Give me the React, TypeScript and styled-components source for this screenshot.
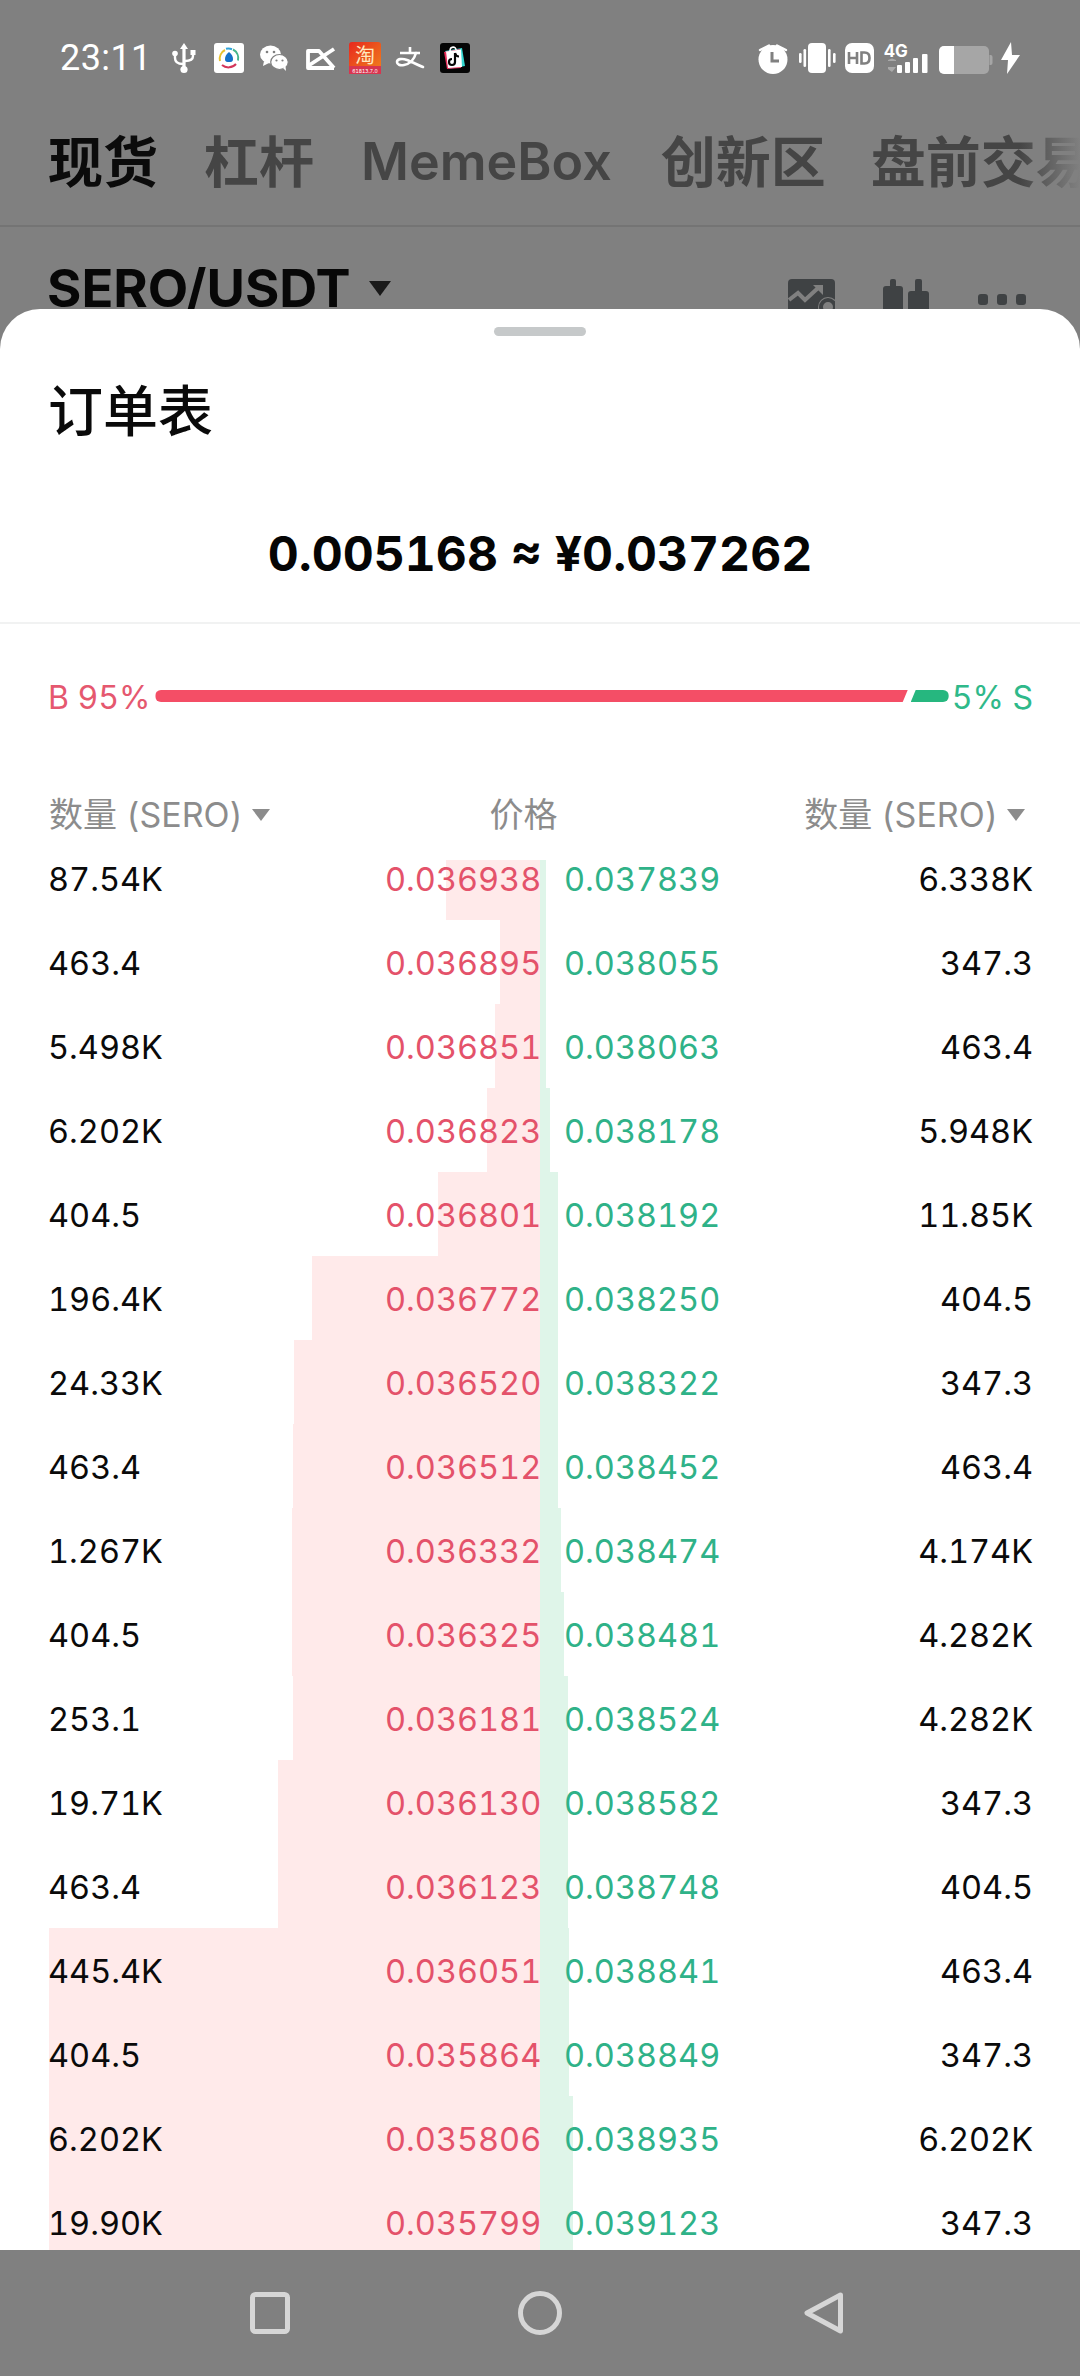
import * as React from "react"
import styled, { createGlobalStyle } from "styled-components"

const SANS = `Inter, "Noto Sans CJK SC", sans-serif`

const GlobalStyle = createGlobalStyle`
	html, body {
		margin: 0;
		padding: 0;
		background: #808080;
	}
	body {
		font-family: ${SANS};
		font-variant-numeric: tabular-nums;
	}
`

const Screen = styled.div`
	width: 1080px;
	height: 2376px;
	display: flex;
	flex-direction: column;
	background: #808080;
	overflow: hidden;
`

const Backdrop = styled.header`
	height: 309px;
	flex: none;
	overflow: hidden;
`

const StatusBar = styled.div`
	height: 116px;
	box-sizing: border-box;
	padding: 42px 60px 0 60px;
	display: flex;
	justify-content: space-between;
	align-items: flex-start;
`

const StatusLeft = styled.div`
	display: flex;
	align-items: center;
	height: 32px;
`

const Clock = styled.span`
	width: 108px;
	color: #fff;
	font: 400 36px/32px Roboto, sans-serif;
	letter-spacing: 0.4px;
`

const Notifications = styled.div`
	display: flex;
	align-items: center;
	gap: 13.2px;
`

const StatusRight = styled.div`
	display: flex;
	align-items: center;
	gap: 8px;
	height: 32px;
`

const Tabs = styled.nav`
	height: 111px;
	box-sizing: border-box;
	padding: 0 0 17px 48px;
	display: flex;
	align-items: center;
	border-bottom: 2px solid #747474;
	position: relative;
	white-space: nowrap;
	overflow: hidden;
	&::after {
		content: "";
		position: absolute;
		top: 0;
		right: 0;
		bottom: 0;
		width: 60px;
		background: linear-gradient(to right, rgba(128, 128, 128, 0), #808080);
	}
`

const Tab = styled.span<{ $active?: boolean; $latin?: boolean; $gap: number }>`
	flex: none;
	margin-right: ${(p) => p.$gap}px;
	font-size: ${(p) => (p.$latin ? 52 : 55)}px;
	line-height: 70px;
	font-weight: ${(p) => (p.$latin ? 600 : 700)};
	color: ${(p) => (p.$active ? "#0b0b0b" : "#454545")};
`

const PairRow = styled.div`
	display: flex;
	align-items: flex-start;
	justify-content: space-between;
	padding: 34px 54px 0 47px;
`

const PairName = styled.div`
	display: flex;
	align-items: center;
	gap: 18px;
	font-size: 52.5px;
	line-height: 54px;
	font-weight: 700;
	color: #070707;
	white-space: nowrap;
`

const PairCaret = styled.span`
	width: 0;
	height: 0;
	border-left: 11px solid transparent;
	border-right: 11px solid transparent;
	border-top: 15px solid #1a1a1a;
`

const PairTools = styled.div`
	display: flex;
	gap: 48px;
	padding-top: 18px;
`

const Sheet = styled.section`
	flex: none;
	height: 1941px;
	background: #fff;
	border-radius: 40px 40px 0 0;
	display: flex;
	flex-direction: column;
	overflow: hidden;
`

const Handle = styled.div`
	flex: none;
	width: 92px;
	height: 9px;
	margin: 18px auto 0;
	border-radius: 5px;
	background: #c6c9ca;
`

const Title = styled.h1`
	margin: 39px 0 0 48px;
	font-size: 55px;
	line-height: 72px;
	font-weight: 500;
	color: #0a0a0a;
`

const LastPrice = styled.div`
	margin-top: 65px;
	height: 112px;
	box-sizing: border-box;
	padding-top: 14px;
	text-align: center;
	font-size: 48px;
	line-height: 56px;
	font-weight: 700;
	color: #050505;
	border-bottom: 2px solid #f1f2f2;
`

const Ratio = styled.div`
	margin-top: 54px;
	padding: 0 47px 0 48px;
	height: 40px;
	display: flex;
	align-items: center;
	font-size: 32px;
	line-height: 40px;
`

const RatioLabel = styled.span<{ $buy?: boolean }>`
	flex: none;
	color: ${(p) => (p.$buy ? "#e5586f" : "#2fb98a")};
`

const RatioTrack = styled.div`
	flex: 1;
	display: flex;
	gap: 3px;
	height: 12px;
	margin: 0 3px 4px 5px;
`

const BuyBar = styled.div`
	flex: 1;
	background: #f44e66;
	border-radius: 6px 0 0 6px;
	clip-path: polygon(0 0, 100% 0, calc(100% - 5px) 100%, 0 100%);
`

const SellBar = styled.div`
	width: 38px;
	background: #26b77f;
	border-radius: 0 6px 6px 0;
	clip-path: polygon(5px 0, 100% 0, 100% 100%, 0 100%);
`

const ColumnHeads = styled.div`
	margin-top: 75px;
	padding: 0 55px 0 49px;
	height: 44px;
	display: flex;
	align-items: center;
	justify-content: space-between;
	font-size: 34px;
	line-height: 44px;
	color: #8c8c8c;
`

const HeadCell = styled.span`
	display: flex;
	align-items: center;
	gap: 9px;
	white-space: nowrap;
`

const HeadPrice = styled.span`
	margin-left: -27px;
`

const HeadCaret = styled.span`
	width: 0;
	height: 0;
	border-left: 9px solid transparent;
	border-right: 9px solid transparent;
	border-top: 12px solid #8c8c8c;
`

const BookWindow = styled.div`
	margin-top: 23px;
	flex: 1;
	min-height: 0;
	overflow: hidden;
`

const BookRows = styled.div`
	margin-top: -24px;
`

const Row = styled.div`
	position: relative;
	height: 84px;
	margin: 0 47px 0 48px;
	display: grid;
	grid-template-columns: 337px 154px 25px 154px 1fr;
	align-items: center;
	font-size: 32.5px;
	line-height: 40px;
	padding-top: 3px;
	box-sizing: border-box;
`

const Depth = styled.div<{ $side: "buy" | "sell" }>`
	position: absolute;
	top: 0;
	bottom: 0;
	${(p) => (p.$side === "buy" ? "left: 492px; transform: translateX(-100%); background: #ffeaea;" : "left: 492px; background: #dff5e9;")}
`

const Cell = styled.span<{ $tone?: "buy" | "sell"; $end?: boolean }>`
	position: relative;
	color: ${(p) => (p.$tone === "buy" ? "#e4526a" : p.$tone === "sell" ? "#2fb288" : "#0a0a0a")};
	text-align: ${(p) => (p.$end ? "right" : "left")};
	white-space: nowrap;
`

const NavBar = styled.footer`
	flex: none;
	height: 126px;
	box-sizing: border-box;
	padding: 40px 0 0 248px;
	display: flex;
	align-items: flex-start;
`

const NavIcon = styled.svg<{ $gap?: number }>`
	flex: none;
	margin-right: ${(p) => p.$gap ?? 0}px;
	fill: none;
	stroke: #d6d6d6;
	stroke-width: 5;
	stroke-linejoin: round;
`

const book: [string, string, string, string, number, number][] = [
	["87.54K", "0.036938", "0.037839", "6.338K", 445, 546],
	["463.4", "0.036895", "0.038055", "347.3", 499, 546],
	["5.498K", "0.036851", "0.038063", "463.4", 494, 546],
	["6.202K", "0.036823", "0.038178", "5.948K", 486, 550],
	["404.5", "0.036801", "0.038192", "11.85K", 437, 558],
	["196.4K", "0.036772", "0.038250", "404.5", 311, 558],
	["24.33K", "0.036520", "0.038322", "347.3", 293, 558],
	["463.4", "0.036512", "0.038452", "463.4", 292, 558],
	["1.267K", "0.036332", "0.038474", "4.174K", 291, 561],
	["404.5", "0.036325", "0.038481", "4.282K", 291, 564],
	["253.1", "0.036181", "0.038524", "4.282K", 292, 568],
	["19.71K", "0.036130", "0.038582", "347.3", 277, 568],
	["463.4", "0.036123", "0.038748", "404.5", 277, 568],
	["445.4K", "0.036051", "0.038841", "463.4", 48, 569],
	["404.5", "0.035864", "0.038849", "347.3", 48, 569],
	["6.202K", "0.035806", "0.038935", "6.202K", 48, 573],
	["19.90K", "0.035799", "0.039123", "347.3", 48, 573],
]

const Usb = () => (
	<svg width="32" height="32" viewBox="0 0 32 32" fill="none">
		<path d="M16 1l4 6h-2.400v20h-3.200V7H12z" fill="#fff" />
		<circle cx="16" cy="27.500" r="3.600" fill="#fff" />
		<path d="M15 22c-5 0-8-2-8-6v-3" stroke="#fff" strokeWidth="2.400" />
		<path d="M17 19c5 0 8-1.500 8-5v-2" stroke="#fff" strokeWidth="2.400" />
		<circle cx="7" cy="11.500" r="2.800" fill="#fff" />
		<rect x="22.500" y="8" width="5" height="5" fill="#fff" />
	</svg>
)

const News = () => (
	<svg width="32" height="32" viewBox="0 0 32 32" fill="none">
		<rect x="1" y="1" width="30" height="30" rx="3" fill="#fff" />
		<path d="M7 19a10 10 0 0 1 5-11" stroke="#e9c12e" strokeWidth="2" />
		<path d="M13 6.800a10 10 0 0 1 6 .4" stroke="#31a3d8" strokeWidth="2" />
		<path d="M20 7.500a10 10 0 0 1 5 11" stroke="#46b58c" strokeWidth="2" />
		<path d="M9 23a10 10 0 0 0 14-1" stroke="#d3365a" strokeWidth="2" />
		<path d="M16 10c3 2 4 5 4 7 0 3-2 3-4 3s-4 0-4-3c0-2 1-5 4-7z" fill="#1570c8" />
	</svg>
)

const Wechat = () => (
	<svg width="32" height="32" viewBox="0 0 32 32" fill="#fff">
		<ellipse cx="12.500" cy="12.500" rx="10.500" ry="9" />
		<path d="M6 19l-1 5 6-3z" />
		<ellipse cx="21.500" cy="20" rx="8.800" ry="7.500" stroke="#808080" strokeWidth="1.200" />
		<path d="M25 26l3 3-.5-5z" />
		<circle cx="9" cy="10" r="1.300" fill="#808080" />
		<circle cx="16" cy="10" r="1.300" fill="#808080" />
		<circle cx="18.500" cy="18.500" r="1.100" fill="#808080" />
		<circle cx="24.500" cy="18.500" r="1.100" fill="#808080" />
	</svg>
)

const Capcut = () => (
	<svg width="32" height="32" viewBox="0 0 32 32" fill="none" stroke="#fff" strokeWidth="3.800">
		<path d="M30 26H4l0 -17h11L30 26" strokeLinejoin="round" />
		<path d="M30 7L4 24" />
	</svg>
)

const Taobao = () => (
	<svg width="32" height="32" viewBox="0 0 32 32">
		<defs>
			<linearGradient id="tb" x1="0" y1="0" x2="1" y2="1">
				<stop offset="0" stopColor="#e8281e" />
				<stop offset="1" stopColor="#f0841c" />
			</linearGradient>
		</defs>
		<rect width="32" height="32" rx="3" fill="url(#tb)" />
		<rect y="24" width="32" height="8" fill="#d8354f" />
		<text x="16" y="21" fontSize="20" textAnchor="middle" fill="#ffe9c0" fontFamily="Noto Sans CJK SC">淘</text>
		<text x="16" y="30.500" fontSize="5" textAnchor="middle" fill="#fff" fontFamily="Inter">61813.7.0</text>
	</svg>
)

const Alipay = () => (
	<svg width="32" height="32" viewBox="0 0 32 32" fill="none" stroke="#fff" strokeWidth="2.600">
		<path d="M6 11h20M16 5v6" />
		<path d="M22 11c-2 7-7 11-12 12-4 .8-7-.5-7-3 0-3 5-4 10-2 5 2 11 5 16 7" strokeLinecap="round" />
	</svg>
)

const TikTokShop = () => (
	<svg width="32" height="32" viewBox="0 0 32 32" fill="none">
		<rect x="1" y="1" width="30" height="30" rx="3" fill="#050505" />
		<path d="M6 9l17-3 3 18-16 3z" fill="#34d6cf" />
		<path d="M5 10l16-3 1 19-14 1z" fill="#e92d5a" />
		<path d="M7 9.500l15-2 1 17.500-14 1z" fill="#fff" />
		<path d="M11 9c0-5 6-5 6-1" stroke="#fff" strokeWidth="1.600" />
		<path d="M16 11v9a3 3 0 1 1-3-3M16 11c.5 2 2 3.500 4 3.500" stroke="#050505" strokeWidth="2.200" />
	</svg>
)

const Alarm = () => (
	<svg width="34" height="32" viewBox="0 0 34 32" fill="none">
		<circle cx="17" cy="17.500" r="14.500" fill="#fff" />
		<path d="M13 3.500L4 8M21 3.500L30 8" stroke="#fff" strokeWidth="2.400" strokeLinecap="round" />
		<path d="M16 10v9h7" stroke="#808080" strokeWidth="3" />
	</svg>
)

const Vibrate = () => (
	<svg width="38" height="32" viewBox="0 0 38 32" fill="#fff">
		<rect x="10" y="1" width="18" height="30" rx="4" />
		<rect x="1" y="11" width="2.600" height="10" rx="1.300" />
		<rect x="5.500" y="7" width="2.600" height="18" rx="1.300" />
		<rect x="30" y="7" width="2.600" height="18" rx="1.300" />
		<rect x="35" y="11" width="2.600" height="10" rx="1.300" />
	</svg>
)

const HdBadge = () => (
	<svg width="31" height="32" viewBox="0 0 31 32">
		<rect x="1" y="1" width="29" height="30" rx="7" fill="#fff" />
		<path d="M5 10v12M13 10v12M5 16h8" stroke="#808080" strokeWidth="2.600" fill="none" />
		<path d="M17.500 10.500v11h3c3.500 0 5-2 5-5.500s-1.500-5.500-5-5.500z" stroke="#808080" strokeWidth="2.600" fill="none" />
	</svg>
)

const SignalBadge = () => (
	<svg width="48" height="32" viewBox="0 0 48 32" fill="#fff">
		<text x="1" y="15" fontSize="17" fontWeight="700" fontFamily="Inter" fill="#fff">4G</text>
		<path d="M5 18l4-1.500 4 1.500v1H5zM5 25h8l-4 5-4-3z" fill="#a9a9a9" />
		<rect x="14" y="23" width="5" height="8" rx="1" />
		<rect x="22" y="20" width="5" height="11" rx="1" />
		<rect x="30" y="16" width="5" height="15" rx="1" />
		<rect x="39" y="12" width="5.500" height="19" rx="1" />
	</svg>
)

const Battery = () => (
	<svg width="54" height="32" viewBox="0 0 54 32">
		<rect x="0" y="4" width="50" height="28" rx="5" fill="#a6a6a6" />
		<path d="M5 4h10v28H5a5 5 0 0 1-5-5V9a5 5 0 0 1 5-5z" fill="#fff" />
		<path d="M50.500 13h1a2 2 0 0 1 2 2v6a2 2 0 0 1-2 2h-1z" fill="#a6a6a6" />
	</svg>
)

const Bolt = () => (
	<svg width="19" height="32" viewBox="0 0 19 32" fill="#fff">
		<path d="M10 0L0 18h7l-1 14 13-19h-8z" />
	</svg>
)

const ChartTool = () => (
	<svg width="47" height="42" viewBox="0 0 47 42">
		<path d="M4 0h39a4 4 0 0 1 4 4v26H0V4a4 4 0 0 1 4-4z" fill="#3f4244" />
		<path d="M1 21l9-7 7 7 13-12" stroke="#808080" strokeWidth="4" fill="none" />
		<path d="M25 6h10v10z" fill="#808080" />
		<circle cx="40" cy="28" r="10" fill="#808080" />
		<circle cx="40" cy="28" r="7" fill="none" stroke="#3f4244" strokeWidth="4" />
	</svg>
)

const CandleTool = () => (
	<svg width="47" height="42" viewBox="0 0 47 42" fill="#3f4244">
		<rect x="0" y="7" width="20" height="34" rx="3" />
		<rect x="7" y="0" width="6" height="10" rx="2" />
		<rect x="25" y="12" width="21" height="30" rx="3" />
		<rect x="32" y="0" width="7" height="16" rx="2" />
	</svg>
)

const DotsTool = () => (
	<svg width="48" height="42" viewBox="0 0 48 42" fill="#3f4244">
		<rect x="0" y="15" width="10" height="11" rx="3" />
		<rect x="19" y="15" width="10" height="11" rx="3" />
		<rect x="38" y="15" width="10" height="11" rx="3" />
	</svg>
)

export default function App() {
	return (
		<Screen>
			<GlobalStyle />
			<Backdrop>
				<StatusBar>
					<StatusLeft>
						<Clock>23:11</Clock>
						<Notifications>
							<Usb />
							<News />
							<Wechat />
							<Capcut />
							<Taobao />
							<Alipay />
							<TikTokShop />
						</Notifications>
					</StatusLeft>
					<StatusRight>
						<Alarm />
						<Vibrate />
						<HdBadge />
						<SignalBadge />
						<Battery />
						<Bolt />
					</StatusRight>
				</StatusBar>
				<Tabs>
					<Tab $active $gap={46}>现货</Tab>
					<Tab $gap={47}>杠杆</Tab>
					<Tab $latin $gap={49}>MemeBox</Tab>
					<Tab $gap={45}>创新区</Tab>
					<Tab $gap={0}>盘前交易</Tab>
				</Tabs>
				<PairRow>
					<PairName>
						SERO/USDT
						<PairCaret />
					</PairName>
					<PairTools>
						<ChartTool />
						<CandleTool />
						<DotsTool />
					</PairTools>
				</PairRow>
			</Backdrop>
			<Sheet>
				<Handle />
				<Title>订单表</Title>
				<LastPrice>0.005168 ≈ ¥0.037262</LastPrice>
				<Ratio>
					<RatioLabel $buy>B 95%</RatioLabel>
					<RatioTrack>
						<BuyBar />
						<SellBar />
					</RatioTrack>
					<RatioLabel>5% S</RatioLabel>
				</Ratio>
				<ColumnHeads>
					<HeadCell>
						数量 (SERO)
						<HeadCaret />
					</HeadCell>
					<HeadPrice>价格</HeadPrice>
					<HeadCell>
						数量 (SERO)
						<HeadCaret />
					</HeadCell>
				</ColumnHeads>
				<BookWindow>
					<BookRows>
						{book.map(([buyQty, buyPrice, sellPrice, sellQty, buyEdge, sellEdge]) => (
							<Row key={buyPrice}>
								<Depth $side="buy" style={{ width: 539 - buyEdge }} />
								<Depth $side="sell" style={{ width: sellEdge - 540 }} />
								<Cell>{buyQty}</Cell>
								<Cell $tone="buy" $end>{buyPrice}</Cell>
								<span />
								<Cell $tone="sell">{sellPrice}</Cell>
								<Cell $end>{sellQty}</Cell>
							</Row>
						))}
					</BookRows>
				</BookWindow>
			</Sheet>
			<NavBar>
				<NavIcon $gap={225} width="44" height="46" viewBox="0 0 44 46">
					<rect x="4.500" y="4.500" width="35" height="37" rx="3" />
				</NavIcon>
				<NavIcon $gap={239} width="46" height="46" viewBox="0 0 46 46">
					<circle cx="23" cy="23" r="19.500" />
				</NavIcon>
				<NavIcon width="44" height="46" viewBox="0 0 44 46">
					<path d="M38.500 5L5 23l33.500 18z" />
				</NavIcon>
			</NavBar>
		</Screen>
	)
}
